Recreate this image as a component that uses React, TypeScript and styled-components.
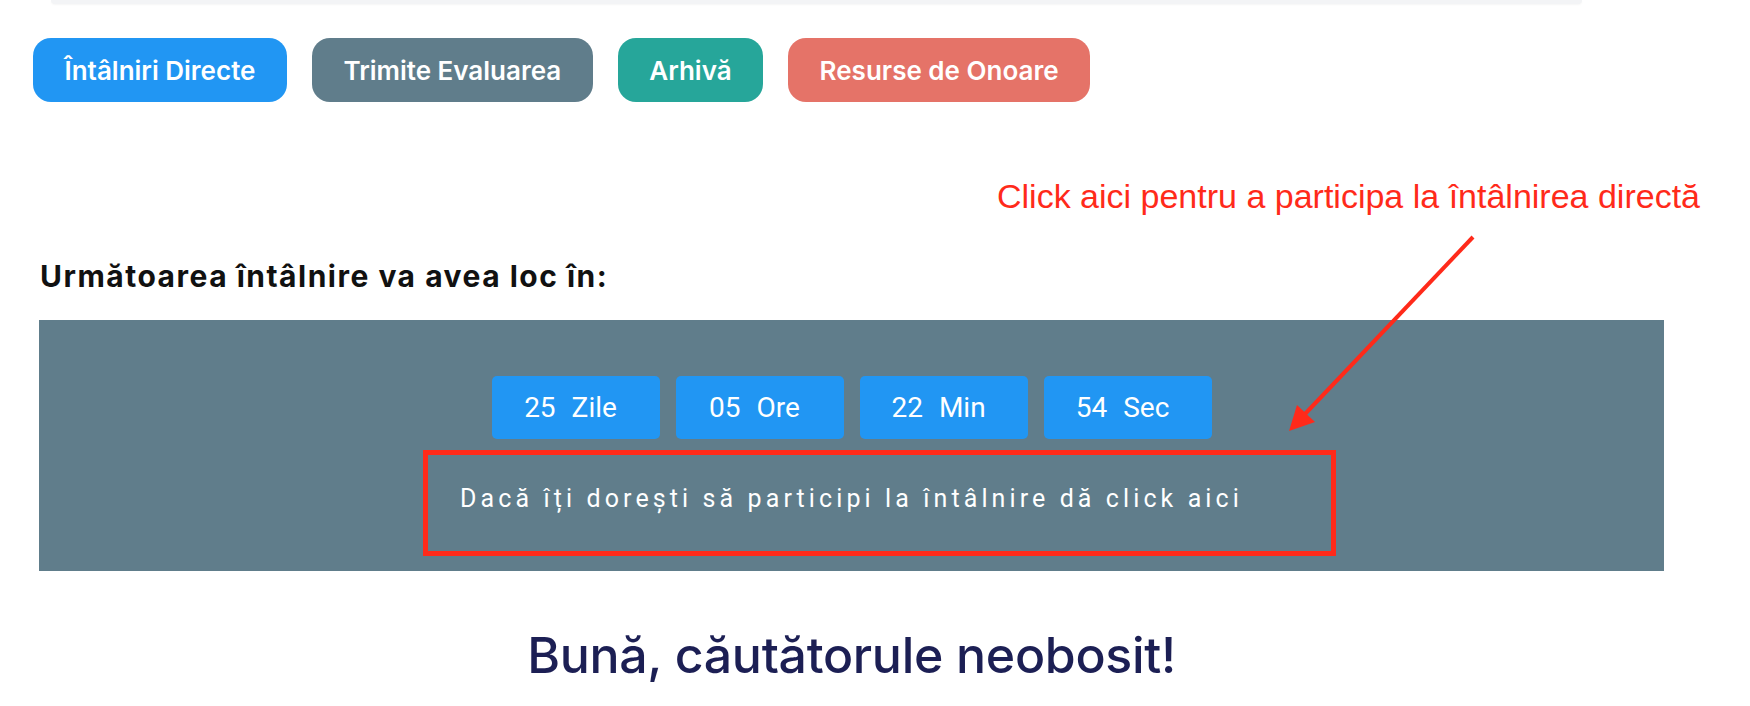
import * as React from 'react';
import styled, { createGlobalStyle } from 'styled-components';

const GlobalStyle = createGlobalStyle`
    body {
        margin: 0;
        background: #ffffff;
        font-family: Inter, 'Liberation Sans', sans-serif;
    }
`;

const Page = styled.div`
    position: relative;
    width: 1750px;
    min-height: 706px;
    overflow: hidden;
`;

// bottom edge of the header card above
const TopCard = styled.div`
    height: 4px;
    margin: 0 168px 0 51px;
    background: #f3f4f6;
    border-radius: 0 0 14px 14px;
    box-shadow: 0 1px 2px rgba(0, 0, 0, 0.04);
`;

const Nav = styled.nav`
    display: flex;
    gap: 25px;
    margin: 34px 0 0 33px;
`;

const NavButton = styled.a<{ $bg: string }>`
    display: inline-flex;
    align-items: center;
    height: 64px;
    padding: 0 31.5px;
    border-radius: 18px;
    background: ${p => p.$bg};
    color: #ffffff;
    font-family: Inter, 'Liberation Sans', sans-serif;
    font-weight: 600;
    font-size: 26px;
    text-decoration: none;
    cursor: pointer;
`;

// red note drawn over the page
const Callout = styled.div`
    margin-top: 75px;
    padding-right: 50px;
    text-align: right;
    font-family: 'Liberation Sans', Arial, sans-serif;
    font-size: 34px;
    line-height: 38px;
    color: #ff2a1a;
`;

const SectionTitle = styled.h2`
    margin: 43px 0 0 40px;
    font-family: Inter, 'Liberation Sans', sans-serif;
    font-weight: 700;
    font-size: 30px;
    line-height: 36px;
    letter-spacing: 1.5px;
    color: #111111;
`;

const Panel = styled.section`
    position: relative;
    box-sizing: border-box;
    width: 1625px;
    margin: 26px 0 0 39px;
    padding: 56px 0 57px;
    background: #607d8b;
    display: flex;
    flex-direction: column;
    align-items: center;
`;

const Countdown = styled.div`
    display: flex;
    gap: 16px;
`;

const TimeBox = styled.div`
    box-sizing: border-box;
    width: 168px;
    height: 63px;
    padding-right: 10px;
    display: flex;
    align-items: center;
    justify-content: center;
    gap: 16px;
    background: #2196f3;
    border-radius: 5px;
    color: #ffffff;
    font-family: Roboto, 'Liberation Sans', sans-serif;
    font-size: 28px;
`;

const JoinLink = styled.a`
    margin-top: 45px;
    font-family: Roboto, 'Liberation Sans', sans-serif;
    font-size: 25px;
    line-height: 30px;
    letter-spacing: 4.1px;
    color: #ffffff;
    text-decoration: none;
    cursor: pointer;
`;

const AnnotationBox = styled.div`
    position: absolute;
    left: 384px;
    top: 130px;
    box-sizing: border-box;
    width: 913px;
    height: 106px;
    border: 5px solid #ff2a1a;
    pointer-events: none;
`;

const Greeting = styled.h1`
    width: 1625px;
    margin: 54px 0 0 39px;
    text-align: center;
    font-family: Inter, 'Liberation Sans', sans-serif;
    font-weight: 500;
    font-size: 50px;
    line-height: 60px;
    letter-spacing: -0.3px;
    color: #1c1f54;
`;

const ArrowLayer = styled.svg`
    position: absolute;
    left: 0;
    top: 0;
    pointer-events: none;
`;

const buttons = [
    { label: 'Întâlniri Directe', bg: '#2196f3' },
    { label: 'Trimite Evaluarea', bg: '#607d8b' },
    { label: 'Arhivă', bg: '#26a69a' },
    { label: 'Resurse de Onoare', bg: '#e57368' },
];

const countdown = [
    { value: '25', unit: 'Zile' },
    { value: '05', unit: 'Ore' },
    { value: '22', unit: 'Min' },
    { value: '54', unit: 'Sec' },
];

const App: React.FC = () => (
    <Page>
        <GlobalStyle />
        <TopCard />
        <Nav>
            {buttons.map(b => (
                <NavButton key={b.label} $bg={b.bg}>{b.label}</NavButton>
            ))}
        </Nav>
        <Callout>Click aici pentru a participa la întâlnirea directă</Callout>
        <SectionTitle>Următoarea întâlnire va avea loc în:</SectionTitle>
        <Panel>
            <Countdown>
                {countdown.map(c => (
                    <TimeBox key={c.unit}>
                        <span>{c.value}</span>
                        <span>{c.unit}</span>
                    </TimeBox>
                ))}
            </Countdown>
            <JoinLink>Dacă îți dorești să participi la întâlnire dă click aici</JoinLink>
            <AnnotationBox />
        </Panel>
        <Greeting>Bună, căutătorule neobosit!</Greeting>
        <ArrowLayer width="1750" height="706" viewBox="0 0 1750 706">
            <line x1="1473" y1="237" x2="1305" y2="414" stroke="#ff2a1a" strokeWidth="4" />
            <polygon points="1289,431 1297,405 1315,422" fill="#ff2a1a" />
        </ArrowLayer>
    </Page>
);

export default App;
